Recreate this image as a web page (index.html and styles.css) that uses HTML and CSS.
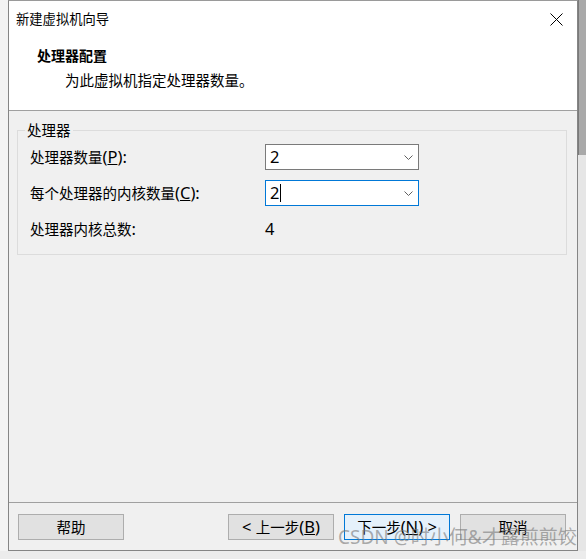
FILE: index.html
```html
<!DOCTYPE html>
<html lang="zh-CN">
<head>
    <meta charset="UTF-8">
    <meta name="viewport" content="width=device-width, initial-scale=1.0">
    <title>新建虚拟机向导</title>
    <link rel="stylesheet" href="styles.css">
</head>
<body>
    <div class="screen">
        <div class="dialog">
            <div class="head">
                <div class="titlebar">
                    <span class="title">新建虚拟机向导</span>
                    <svg class="close" width="13" height="13" viewBox="0 0 13 13">
                        <path d="M0.5 0.5 L12.5 12.5 M12.5 0.5 L0.5 12.5" stroke="#000" stroke-width="1" fill="none"/>
                    </svg>
                </div>
                <div class="intro">
                    <h1>处理器配置</h1>
                    <p>为此虚拟机指定处理器数量。</p>
                </div>
            </div>

            <div class="main">
                <fieldset class="group">
                    <legend>处理器</legend>
                    <div class="row">
                        <label>处理器数量<span class="en">(<u>P</u>):</span></label>
                        <div class="combo">
                            <span class="value en">2</span>
                            <svg class="chevron" width="9" height="5" viewBox="0 0 9 5">
                                <path d="M0.5 0.5 L4.5 4.5 L8.5 0.5" stroke="#606060" stroke-width="1" fill="none"/>
                            </svg>
                        </div>
                    </div>
                    <div class="row">
                        <label>每个处理器的内核数量<span class="en">(<u>C</u>):</span></label>
                        <div class="combo focused">
                            <span class="value en">2<span class="caret"></span></span>
                            <svg class="chevron" width="9" height="5" viewBox="0 0 9 5">
                                <path d="M0.5 0.5 L4.5 4.5 L8.5 0.5" stroke="#606060" stroke-width="1" fill="none"/>
                            </svg>
                        </div>
                    </div>
                    <div class="row">
                        <label>处理器内核总数<span class="en">:</span></label>
                        <span class="total en">4</span>
                    </div>
                </fieldset>
            </div>

            <div class="foot">
                <button class="btn">帮助</button>
                <div class="nav">
                    <button class="btn"><span class="en">&lt; </span>上一步<span class="en">(<u>B</u>)</span></button>
                    <button class="btn default">下一步<span class="en">(<u>N</u>) &gt;</span></button>
                    <button class="btn">取消</button>
                </div>
            </div>
        </div>
        <div class="edge">
            <div class="edge-top"></div>
            <div class="edge-bottom"></div>
        </div>
    </div>
    <div class="watermark">CSDN @时小何&amp;才露煎煎饺</div>
</body>
</html>
```

FILE: styles.css
```css
body {
    margin: 0;
    width: 586px;
    height: 559px;
    overflow: hidden;
    background-color: #ececec;
    font-family: "Noto Sans", "Noto Sans CJK SC", sans-serif;
    font-size: 14.5px;
    color: #000;
    position: relative;
}
.en {
    font-size: 16.5px;
}
.screen {
    display: flex;
    height: 551px;
    padding-left: 8px;
    background-color: #f3f3f3;
}
.dialog {
    box-sizing: border-box;
    width: 570px;
    height: 551px;
    border: 1px solid #858585;
    border-top-color: #9a9a9a;
    background-color: #f0f0f0;
    display: flex;
    flex-direction: column;
}
.head {
    box-sizing: border-box;
    height: 110px;
    background-color: #fff;
    border-bottom: 1px solid #a0a0a0;
}
.titlebar {
    height: 36px;
    display: flex;
    align-items: center;
    justify-content: space-between;
    padding: 0 14px 0 7px;
}
.title {
    font-size: 13.3px;
    line-height: 20px;
}
.intro {
    margin-top: 7px;
}
.intro h1 {
    margin: 0;
    padding-left: 28px;
    font-size: 14px;
    font-weight: bold;
    line-height: 24px;
}
.intro p {
    margin: 0;
    padding-left: 56px;
    line-height: 24px;
}
.main {
    flex: 1;
    padding: 9px 10px 0 8px;
}
.group {
    margin: 0;
    padding: 4px 12px 12px 12px;
    border: 1px solid #dcdcdc;
    display: flex;
    flex-direction: column;
    gap: 10px;
}
.group legend {
    padding: 0 2px;
    margin-left: -5px;
    line-height: 20px;
}
.row {
    display: grid;
    grid-template-columns: 235px 154px;
    align-items: center;
    height: 26px;
}
.row label {
    line-height: 20px;
}
.combo {
    box-sizing: border-box;
    height: 26px;
    background-color: #fff;
    border: 1px solid #7a7a7a;
    display: flex;
    align-items: center;
    justify-content: space-between;
    padding: 0 5px 0 4px;
}
.combo.focused {
    border-color: #0078d7;
}
.value {
    display: flex;
    align-items: center;
    line-height: 20px;
}
.caret {
    display: inline-block;
    width: 1px;
    height: 18px;
    background-color: #000;
    margin-left: 1px;
}
.total {
    line-height: 20px;
}
.foot {
    box-sizing: border-box;
    height: 48px;
    border-top: 1px solid #a0a0a0;
    padding: 11px 11px 0 9px;
    display: flex;
    justify-content: space-between;
    align-items: flex-start;
}
.nav {
    display: flex;
    gap: 10px;
}
.btn {
    box-sizing: border-box;
    width: 106px;
    height: 26px;
    padding: 0;
    background-color: #e1e1e1;
    border: 1px solid #adadad;
    font-family: inherit;
    font-size: 14.5px;
    color: #000;
    line-height: 20px;
}
.btn.default {
    background-color: #e5f1fb;
    border-color: #0078d7;
}
.edge {
    width: 8px;
    display: flex;
    flex-direction: column;
}
.edge-top {
    height: 155px;
    background-color: #a9a9a9;
    border-left: 1px solid #7a7a7a;
}
.edge-bottom {
    flex: 1;
    background-color: #e6e6e6;
}
.watermark {
    position: absolute;
    left: 338px;
    top: 525px;
    font-size: 19px;
    line-height: 24px;
    color: rgba(120, 120, 120, 0.6);
    white-space: nowrap;
}
```
